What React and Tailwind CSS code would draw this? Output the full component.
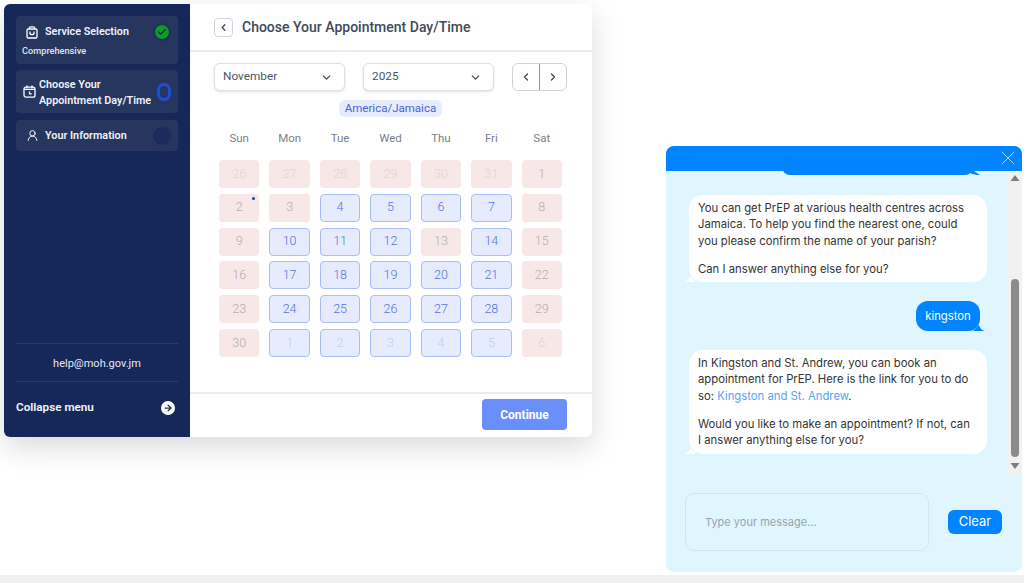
import { ArrowRight, Check, ChevronDown, ChevronLeft, ChevronRight, UserRound, X } from "lucide-react";

const days = ["Sun", "Mon", "Tue", "Wed", "Thu", "Fri", "Sat"];

// kind: p = past/closed faded, c = closed, o = open, f = open faded
const cells = [
  ["26", "p"], ["27", "p"], ["28", "p"], ["29", "p"], ["30", "p"], ["31", "p"], ["1", "c"],
  ["2", "c"], ["3", "c"], ["4", "o"], ["5", "o"], ["6", "o"], ["7", "o"], ["8", "c"],
  ["9", "c"], ["10", "o"], ["11", "o"], ["12", "o"], ["13", "c"], ["14", "o"], ["15", "c"],
  ["16", "c"], ["17", "o"], ["18", "o"], ["19", "o"], ["20", "o"], ["21", "o"], ["22", "c"],
  ["23", "c"], ["24", "o"], ["25", "o"], ["26", "o"], ["27", "o"], ["28", "o"], ["29", "c"],
  ["30", "c"], ["1", "f"], ["2", "f"], ["3", "f"], ["4", "f"], ["5", "f"], ["6", "p"],
];

const cellStyles = {
  p: "bg-[#f7e7e7] text-[#e0d6d6]",
  c: "bg-[#f7e7e7] text-[#b3adad]",
  o: "bg-[#e6ebfd] border border-[#a9bdfb] text-[#5272e2]",
  f: "bg-[#e6ebfd] border border-[#a9bdfb] text-[#c3cdf0]",
};

function BagIcon() {
  return (
    <svg width="12" height="13" viewBox="0 0 12 13" fill="none" stroke="currentColor" strokeWidth="1.3" className="shrink-0">
      <path d="M3.2 3V2.4C3.2 1.3 3.9.8 4.8.8h2.4c.9 0 1.6.5 1.6 1.6V3" />
      <rect x="1" y="3" width="10" height="9" rx="1.2" />
      <path d="M4 5.5v1.2a2 2 0 0 0 4 0V5.5" />
    </svg>
  );
}

function CalendarIcon() {
  return (
    <svg width="13" height="13" viewBox="0 0 13 13" fill="none" stroke="currentColor" strokeWidth="1.3" className="shrink-0">
      <rect x="1" y="2.2" width="11" height="10" rx="2" />
      <path d="M4 .6v2.6M9 .6v2.6M1 4.4h11M6.5 6.4v2.4h2.2" />
    </svg>
  );
}

function Sidebar() {
  return (
    <aside className="w-[186px] shrink-0 bg-[#16285a] flex flex-col px-3 pt-3 text-white font-['Roboto',sans-serif]">
      <div className="h-12 bg-[#26365f] rounded pl-[10px] pr-[7px] pt-[7px] mb-[6px]">
        <div className="flex items-center">
          <BagIcon />
          <span className="ml-[7px] pb-[2px] text-[10.8px] leading-[15px] font-semibold text-[#f0f2f8]">Service Selection</span>
          <span className="ml-auto w-[18px] h-[18px] rounded-full bg-[#0f9b28] border-2 border-[#1c3156] flex items-center justify-center">
            <Check size={10} strokeWidth={3} className="text-[#16285a]" />
          </span>
        </div>
        <div className="text-[9.2px] leading-[12px] mt-[4px] -ml-[4px] font-medium text-[#e2e6f0]">Comprehensive</div>
      </div>
      <div className="h-[43px] bg-[#26365f] rounded pl-[7px] pr-[6px] flex items-center mb-[7px]">
        <CalendarIcon />
        <span className="ml-[3px] pt-[2px] text-[10.8px] leading-[16px] font-semibold text-[#f0f2f8] whitespace-nowrap">
          Choose Your
          <br />
          Appointment Day/Time
        </span>
        <span className="ml-auto mr-[1px] w-[14px] h-[18px] rounded-full border-[3px] border-[#1d4ed8]" />
      </div>
      <div className="h-[31px] bg-[#26365f] rounded pl-[10px] pr-[7px] flex items-center">
        <UserRound size={13} strokeWidth={1.8} className="shrink-0" />
        <span className="ml-[6px] pt-[2px] text-[10.8px] font-semibold text-[#f0f2f8]">Your Information</span>
        <span className="ml-auto w-[18px] h-[18px] rounded-full bg-[#1c2b5e]" />
      </div>
      <div className="mt-auto border-t border-[#2a3a6b] h-[38px] pt-[3px] flex items-center justify-center text-[11px] text-[#e6e9f2]">
        help@moh.gov.jm
      </div>
      <div className="border-t border-[#2a3a6b] h-[56px] flex items-start pt-[17px] pr-[3px] justify-between">
        <span className="text-[11.7px] leading-[16px] font-semibold text-[#f3f5fa]">Collapse menu</span>
        <span className="mt-[2px] w-[14px] h-[14px] rounded-full bg-white flex items-center justify-center">
          <ArrowRight size={10} strokeWidth={3} className="text-[#16285a]" />
        </span>
      </div>
    </aside>
  );
}

function Select({ label }) {
  return (
    <div className="w-[131px] h-7 bg-white border border-[#dcdfe4] rounded-md shadow-sm pl-2 pr-[11px] flex items-center justify-between text-[11.8px] text-[#4b5563]">
      {label}
      <ChevronDown size={13} strokeWidth={2.2} className="text-[#374151]" />
    </div>
  );
}

function Calendar() {
  return (
    <section className="flex-1 min-w-0 flex flex-col font-['Roboto',sans-serif]">
      <header className="h-12 shrink-0 border-b-2 border-[#ececec] pl-6 flex items-center">
        <span className="w-[19px] h-[19px] border border-[#cfd3d9] rounded flex items-center justify-center">
          <ChevronLeft size={11} strokeWidth={2.6} className="text-[#374151]" />
        </span>
        <h1 className="ml-[9px] text-[14px] font-medium text-[#414a58]">Choose Your Appointment Day/Time</h1>
      </header>
      <div className="pl-6 pr-[25px] flex-1">
        <div className="flex items-center mt-[11px]">
          <Select label="November" />
          <div className="ml-[18px]">
            <Select label="2025" />
          </div>
          <div className="ml-auto w-[55px] h-7 bg-white border border-[#cfd3d9] rounded-md flex">
            <span className="flex-1 border-r border-[#8e9299] flex items-center justify-center">
              <ChevronLeft size={12} strokeWidth={2.6} className="text-[#374151]" />
            </span>
            <span className="flex-1 flex items-center justify-center">
              <ChevronRight size={12} strokeWidth={2.6} className="text-[#374151]" />
            </span>
          </div>
        </div>
        <div className="flex justify-center mt-[9px]">
          <span className="h-[17px] px-[6px] rounded-md bg-[#e6ebfd] text-[11.5px] leading-[17px] text-[#4666d9]">America/Jamaica</span>
        </div>
        <div className="grid grid-cols-7 w-[353px] mt-[13px] h-[17px] text-[11.5px] leading-[17px] text-[#7a808a] text-center">
          {days.map((d) => (
            <span key={d}>{d}</span>
          ))}
        </div>
        <div className="grid grid-cols-7 w-[353px] mt-[13px] gap-y-[5.8px]">
          {cells.map(([n, kind], i) => (
            <div key={i} className="px-[5px]">
              <div className={`relative h-7 rounded flex items-center justify-center text-[12.5px] font-light ${cellStyles[kind]}`}>
                {n}
                {i === 7 && <span className="absolute top-[3px] right-[4px] w-[3px] h-[3px] rounded-full bg-[#1d3fbf]" />}
              </div>
            </div>
          ))}
        </div>
      </div>
      <footer className="h-[45px] shrink-0 border-t-2 border-[#ececec] pr-[25px] flex items-start justify-end pt-[5px]">
        <button className="w-[85px] h-[31px] rounded bg-[#6a8ffb] text-white text-[12px] font-bold">Continue</button>
      </footer>
    </section>
  );
}

function Tail({ side, color }) {
  // little speech-bubble corner at the bottom of a message
  if (side === "left") {
    return (
      <svg width="12" height="6" viewBox="0 0 12 6" className="absolute -left-[5px] bottom-0">
        <path d="M0 6C3 5.5 5 3.5 6 0L12 6Z" fill={color} />
      </svg>
    );
  }
  return (
    <svg width="12" height="6" viewBox="0 0 12 6" className="absolute -right-[5px] bottom-0">
      <path d="M12 6C9 5.5 7 3.5 6 0L0 6Z" fill={color} />
    </svg>
  );
}

function Bubble({ children }) {
  return (
    <div className="relative ml-[23px] w-[298px] bg-white rounded-[14px] pl-[9px] py-[5px] text-[#333333] text-[11.3px] leading-[16.3px] whitespace-nowrap">
      {children}
      <Tail side="left" color="#ffffff" />
    </div>
  );
}

function Scrollbar() {
  return (
    <div className="w-[15px] shrink-0 bg-[#f1f1f1] flex flex-col items-center">
      <svg width="10" height="8" viewBox="0 0 10 8" className="mt-[3px]">
        <path d="M5 1 9.5 7H.5Z" fill="#7d7d7d" />
      </svg>
      <div className="w-2 h-[178px] mt-[97px] rounded bg-[#8c8c8c]" />
      <svg width="10" height="8" viewBox="0 0 10 8" className="mt-[5px]">
        <path d="M5 7 .5 1h9Z" fill="#7d7d7d" />
      </svg>
    </div>
  );
}

function Chat() {
  return (
    <div className="w-[356px] h-[426px] mt-[146px] mr-[2px] shrink-0 bg-[#dff6ff] rounded-[8px] flex flex-col font-['Inter',sans-serif]">
      <div className="relative h-[25px] shrink-0 bg-[#0084ff] rounded-t-[8px]">
        <div className="absolute left-[116px] -bottom-[4px] w-[191px] h-[8px] bg-[#0084ff] rounded-b-[8px]" />
        <svg width="10" height="4" viewBox="0 0 10 4" className="absolute left-[304px] -bottom-[4px]">
          <path d="M0 0H4L10 4C6 4 3 3.5 0 2Z" fill="#0084ff" />
        </svg>
        <X size={24} strokeWidth={0.8} className="absolute right-[2px] top-0 text-[#cfe8ff]" />
      </div>
      <div className="h-[304px] shrink-0 flex">
        <div className="flex-1 min-w-0 pt-6">
          <Bubble>
            You can get PrEP at various health centres across
            <br />
            Jamaica. To help you find the nearest one, could
            <br />
            you please confirm the name of your parish?
            <p className="mt-[12px]">Can I answer anything else for you?</p>
          </Bubble>
          <div className="flex justify-end pr-[27px] mt-[19px]">
            <div className="relative w-[64px] h-[30px] rounded-[12px] bg-[#0084ff] text-white text-[11.3px] flex items-center justify-center">
              kingston
              <Tail side="right" color="#0084ff" />
            </div>
          </div>
          <div className="mt-[19px]">
            <Bubble>
              In Kingston and St. Andrew, you can book an
              <br />
              appointment for PrEP. Here is the link for you to do
              <br />
              so: <span className="text-[#54a5f5]">Kingston and St. Andrew</span>.
              <p className="mt-[12px]">
                Would you like to make an appointment? If not, can
                <br />I answer anything else for you?
              </p>
            </Bubble>
          </div>
        </div>
        <Scrollbar />
      </div>
      <div className="flex items-center pl-[19px] mt-[18px]">
        <div className="w-[244px] h-[58px] border border-[#d3e6ee] rounded-[9px] flex items-center pl-[19px] text-[11px] text-[#9aa3ad]">
          Type your message...
        </div>
        <button className="ml-[19px] w-[54px] h-6 rounded-md bg-[#0084ff] text-white text-[13px]">Clear</button>
      </div>
    </div>
  );
}

export default function App() {
  return (
    <div className="w-[1024px] h-[583px] bg-white flex flex-col overflow-hidden">
      <div className="h-[575px] shrink-0 flex justify-between items-start">
        <div className="ml-1 mt-1 w-[588px] h-[433px] bg-white rounded-[6px] overflow-hidden flex shadow-[0_10px_30px_rgba(0,0,0,0.15)]">
          <Sidebar />
          <Calendar />
        </div>
        <Chat />
      </div>
      <div className="flex-1 bg-[#f1f1f1]" />
    </div>
  );
}
